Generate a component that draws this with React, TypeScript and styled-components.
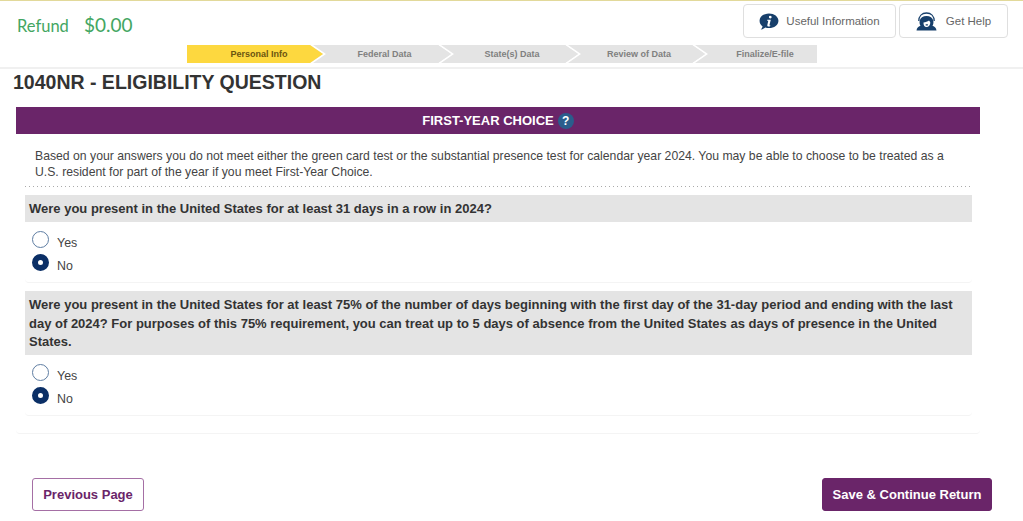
import React from "react";
import styled, { createGlobalStyle } from "styled-components";

const Global = createGlobalStyle`
  html, body { margin: 0; padding: 0; background: #fff; }
  body { font-family: "Liberation Sans", Arial, sans-serif; color: #333; overflow: hidden; }
  * { box-sizing: border-box; }
`;

const Page = styled.div`
  width: 1023px;
  height: 521px;
  display: flex;
  flex-direction: column;
  overflow: hidden;
`;

const Header = styled.header`
  height: 69px;
  border-top: 1px solid #e2d99a;
  border-bottom: 2px solid #f0f0f0;
  display: flex;
  flex-direction: column;
`;

const HeaderTop = styled.div`
  height: 44px;
  display: flex;
  justify-content: space-between;
  padding: 3px 15px 0 17px;
`;

const RefundBox = styled.div`
  display: flex;
  align-items: baseline;
  gap: 15px;
  padding-top: 9px;
  color: #43a662;
  font-family: Lato, sans-serif;
`;

const RefundLabel = styled.span`
  font-size: 16.5px;
`;

const RefundValue = styled.span`
  font-size: 19px;
`;

const HeaderActions = styled.div`
  display: flex;
  gap: 3px;
`;

const ActionButton = styled.button<{ $w: number; $gap: number }>`
  width: ${(p) => p.$w}px;
  height: 34px;
  background: #fff;
  border: 1px solid #dfdfdf;
  border-radius: 4px;
  display: flex;
  align-items: center;
  justify-content: center;
  gap: ${(p) => p.$gap}px;
  font: 11.5px "Liberation Sans", Arial, sans-serif;
  color: #666;
  padding: 0;
`;

const Steps = styled.nav`
  display: flex;
  height: 18px;
  margin-left: 187px;
  width: 630px;
  background: #e4e4e4;
`;

const Step = styled.div<{ $active?: boolean; $w: number; $last?: boolean }>`
  position: relative;
  width: ${(p) => p.$w}px;
  padding-left: 21px;
  display: flex;
  align-items: center;
  justify-content: center;
  font-size: 9px;
  font-weight: 700;
  color: ${(p) => (p.$active ? "#6b5410" : "#808080")};
  background: ${(p) => (p.$active ? "#fdd83f" : "#e4e4e4")};

  &::after {
    content: "";
    display: ${(p) => (p.$last ? "none" : "block")};
    position: absolute;
    z-index: ${(p) => (p.$active ? 2 : 1)};
    left: 100%;
    top: 0;
    width: 13px;
    height: 18px;
    background: ${(p) => (p.$active ? "#fdd83f" : "#e4e4e4")};
    clip-path: polygon(0 0, 100% 50%, 0 100%);
  }

  &::before {
    content: "";
    display: ${(p) => (p.$last ? "none" : "block")};
    position: absolute;
    z-index: 1;
    left: 100%;
    top: 0;
    width: 16px;
    height: 18px;
    background: #fff;
    clip-path: polygon(0 0, 3px 0, 16px 50%, 3px 100%, 0 100%, 13px 50%);
  }
`;

const Title = styled.h1`
  margin: 0;
  padding: 1px 0 0 13px;
  height: 38px;
  font-size: 19.5px;
  line-height: 24px;
  font-weight: 700;
  color: #333;
`;

const Card = styled.section`
  margin-left: 16px;
  width: 964px;
  height: 327px;
  border-bottom: 1px solid #f4f4f4;
  border-radius: 0 0 4px 4px;
`;

const CardHeader = styled.div`
  height: 27px;
  background: #6a2569;
  color: #fff;
  display: flex;
  align-items: center;
  justify-content: center;
  gap: 4px;
  font-size: 13px;
  font-weight: 700;
`;

const HelpDot = styled.span`
  width: 16px;
  height: 16px;
  border-radius: 50%;
  background: #2a5d8c;
  color: #fff;
  font-size: 12px;
  font-weight: 700;
  display: flex;
  align-items: center;
  justify-content: center;
`;

const Intro = styled.p`
  margin: 0 0 0 9px;
  padding: 14px 20px 0 10px;
  width: 947px;
  height: 53px;
  font-size: 12.22px;
  line-height: 16px;
  color: #444;
  background: repeating-linear-gradient(to right, #aaa 0 1px, transparent 1px 4px) left bottom / 100% 1px no-repeat;
`;

const QuestionBlock = styled.div`
  margin-left: 9px;
  width: 947px;
  margin-top: 8px;
  border-bottom: 1px solid #f4f4f4;
  border-radius: 0 0 4px 4px;
`;

const Question = styled.div`
  background: #e4e4e4;
  padding: 5px 4px 3px 4px;
  font-size: 13px;
  line-height: 18.5px;
  font-weight: 700;
  color: #333;
  min-height: 27px;
`;

const Options = styled.div`
  padding: 9px 8px 11px 7px;
  display: flex;
  flex-direction: column;
  gap: 6px;
`;

const Option = styled.label`
  display: flex;
  align-items: center;
  gap: 8px;
  height: 17px;
  font-size: 12.4px;
  color: #444;
`;

const OptionText = styled.span`
  margin-top: 8px;
  line-height: 17px;
`;

const Radio = styled.span<{ $on?: boolean }>`
  width: 17px;
  height: 17px;
  border-radius: 50%;
  flex: none;
  background: #fff;
  border: ${(p) => (p.$on ? "6px solid #0b2f66" : "1px solid #5f7ea3")};
`;

const Footer = styled.footer`
  display: flex;
  justify-content: space-between;
  padding: 0 31px 0 32px;
  margin-top: 44px;
`;

const PrevButton = styled.button`
  width: 112px;
  height: 33px;
  background: #fff;
  border: 1px solid #a56fa5;
  border-radius: 3px;
  color: #6a2569;
  font: 700 13px "Liberation Sans", Arial, sans-serif;
`;

const SaveButton = styled.button`
  width: 170px;
  height: 33px;
  background: #6a2569;
  border: 1px solid #6a2569;
  border-radius: 3px;
  color: #fff;
  font: 700 13px "Liberation Sans", Arial, sans-serif;
`;

const InfoIcon = () => (
  <svg width="20" height="17" viewBox="0 0 21 18">
    <path d="M10.5 0.5C16 0.5 20.5 3.8 20.5 8.2S16 16 10.5 16c-1.4 0-2.7-.2-3.9-.6-1.2 1.2-3 2-4.9 2.1 1-.9 1.7-2 2-3.3C1.700 12.800.5 10.700.5 8.200.5 3.800 5 .5 10.500.5z" fill="#173f6b" />
    <path d="M11.900 2.800a1.500 1.500 0 1 1-.1 3 1.500 1.500 0 0 1 .1-3zM8.700 7.200h3.700l-1.400 5.600c-.1.400.2.500.9.300l-.2.900c-1.600.5-3.200.3-3-1.100l1-4.600-1.200-.2z" fill="#fff" />
  </svg>
);

const HelpIcon = () => (
  <svg width="21" height="19" viewBox="0 0 21 19">
    <path d="M0.500 18.500c.3-2.500 1.700-4 4-4.700C3.700 12.500 3.300 10.500 3.700 8.700 4.300 5.600 7 4 10.500 4s6.200 1.600 6.800 4.700c.4 1.800 0 3.800-.8 5.100 2.300.7 3.700 2.200 4 4.700z" fill="#173f6b" />
    <path d="M2.800 9C2.800 4 6 1 10.500 1s7.700 3 7.700 8" fill="none" stroke="#173f6b" strokeWidth="1.300" />
    <path d="M7.500 10.500c2-.3 4-1 5.500-2l1.200 1.500c.3 2.800-1.200 5-3.700 5-2.100 0-3.200-1.800-3-4.500z" fill="#fff" />
    <rect x="9.500" y="12.200" width="2.600" height="1.200" rx=".6" fill="#173f6b" />
  </svg>
);

export default function App() {
  return (
    <Page>
      <Global />
      <Header>
        <HeaderTop>
          <RefundBox>
            <RefundLabel>Refund</RefundLabel>
            <RefundValue>$0.00</RefundValue>
          </RefundBox>
          <HeaderActions>
            <ActionButton $w={153} $gap={7}><InfoIcon />Useful Information</ActionButton>
            <ActionButton $w={109} $gap={9}><HelpIcon />Get Help</ActionButton>
          </HeaderActions>
        </HeaderTop>
        <Steps>
          <Step $active $w={123}>Personal Info</Step>
          <Step $w={128}>Federal Data</Step>
          <Step $w={127}>State(s) Data</Step>
          <Step $w={127}>Review of Data</Step>
          <Step $w={125} $last>Finalize/E-file</Step>
        </Steps>
      </Header>
      <Title>1040NR - ELIGIBILITY QUESTION</Title>
      <Card>
        <CardHeader>FIRST-YEAR CHOICE <HelpDot>?</HelpDot></CardHeader>
        <Intro>
          Based on your answers you do not meet either the green card test or the substantial presence test for calendar year 2024. You may be able to choose to be treated as a U.S. resident for part of the year if you meet First-Year Choice.
        </Intro>
        <QuestionBlock>
          <Question>Were you present in the United States for at least 31 days in a row in 2024?</Question>
          <Options>
            <Option><Radio /><OptionText>Yes</OptionText></Option>
            <Option><Radio $on /><OptionText>No</OptionText></Option>
          </Options>
        </QuestionBlock>
        <QuestionBlock>
          <Question>Were you present in the United States for at least 75% of the number of days beginning with the first day of the 31-day period and ending with the last day of 2024? For purposes of this 75% requirement, you can treat up to 5 days of absence from the United States as days of presence in the United States.</Question>
          <Options>
            <Option><Radio /><OptionText>Yes</OptionText></Option>
            <Option><Radio $on /><OptionText>No</OptionText></Option>
          </Options>
        </QuestionBlock>
      </Card>
      <Footer>
        <PrevButton>Previous Page</PrevButton>
        <SaveButton>Save &amp; Continue Return</SaveButton>
      </Footer>
    </Page>
  );
}
